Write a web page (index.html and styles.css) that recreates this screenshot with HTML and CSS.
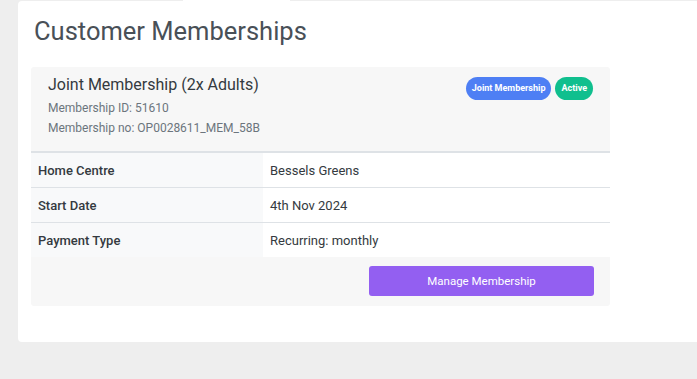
FILE: index.html
```html
<!doctype html>
<html lang="en">
 <head>
  <meta charset="utf-8">
  <title>Customer Memberships</title>
  <link rel="stylesheet" href="styles.css">
 </head>
 <body>
  <div class="page">
   <div class="card">
    <h1 class="card-title">Customer Memberships</h1>
    <div class="membership">
     <div class="membership-head">
      <div class="membership-info">
       <div class="membership-name">Joint Membership (2x Adults)</div>
       <div class="membership-meta">Membership ID: 51610</div>
       <div class="membership-meta">Membership no: OP0028611_MEM_58B</div>
      </div>
      <div class="badges">
       <span class="badge badge-blue">Joint Membership</span>
       <span class="badge badge-green">Active</span>
      </div>
     </div>
     <table class="details">
      <tr>
       <th>Home Centre</th>
       <td>Bessels Greens</td>
      </tr>
      <tr>
       <th>Start Date</th>
       <td>4th Nov 2024</td>
      </tr>
      <tr>
       <th>Payment Type</th>
       <td>Recurring: monthly</td>
      </tr>
     </table>
     <div class="membership-foot">
      <button class="btn-manage" type="button">Manage Membership</button>
     </div>
    </div>
   </div>
  </div>
 </body>
</html>
```

FILE: styles.css
```css
	body {
		margin: 0;
		padding: 0;
		background-color: #eeeeee;
		font-family: Roboto, 'Liberation Sans', sans-serif;
		color: #212529;
	}

	.page {
		padding: 1px 0 0 18px;
		height: 378px;
		overflow: hidden;
		position: relative;
	}

	/* white notch in the top edge */
	.page::before {
		content: "";
		position: absolute;
		top: 0;
		left: 183px;
		width: 107px;
		height: 1px;
		background: #ffffff;
	}

	.card {
		background: #ffffff;
		border-radius: 4px 0 0 4px;
		padding: 15px 0 36px 13px;
	}

	.card-title {
		margin: 0 0 20px 3px;
		font-size: 25.5px;
		font-weight: 400;
		line-height: 31px;
		color: #495057;
	}

	.membership {
		width: 579px;
		background: #f7f7f7;
		border-radius: 3px;
	}

	.membership-head {
		display: flex;
		justify-content: space-between;
		align-items: flex-start;
		padding: 8px 17px 13px 17px;
		border-bottom: 2px solid #dee2e6;
	}

	.membership-name {
		font-size: 16px;
		line-height: 20px;
		color: #343a40;
		margin-bottom: 3px;
	}

	.membership-meta {
		font-size: 12px;
		line-height: 20px;
		color: #6c757d;
	}

	.badges {
		display: flex;
		gap: 4px;
		padding-top: 2px;
	}

	.badge {
		display: inline-block;
		font-size: 9px;
		font-weight: 700;
		line-height: 23px;
		padding: 0 6px;
		border-radius: 12px;
		color: #ffffff;
	}

	.badge-blue {
		background: #4e7ff4;
	}

	.badge-green {
		background: #10bf8e;
	}

	.details {
		width: 100%;
		border-collapse: collapse;
		font-size: 13px;
	}

	.details th,
	.details td {
		padding: 0 7px;
		height: 34px;
		text-align: left;
		border-bottom: 1px solid #dee2e6;
	}

	.details tr:last-child th,
	.details tr:last-child td {
		border-bottom: 0;
	}

	.details th {
		width: 218px;
		background: #f8f9fa;
		font-weight: 500;
		color: #343a40;
	}

	.details td {
		background: #ffffff;
		color: #343a40;
	}

	.membership-foot {
		display: flex;
		justify-content: flex-end;
		padding: 9px 16px 10px 16px;
	}

	.btn-manage {
		width: 225px;
		height: 30px;
		border: 0;
		border-radius: 3px;
		background: #935ff1;
		color: #ffffff;
		font-family: Roboto, 'Liberation Sans', sans-serif;
		font-size: 11.5px;
	}
```
